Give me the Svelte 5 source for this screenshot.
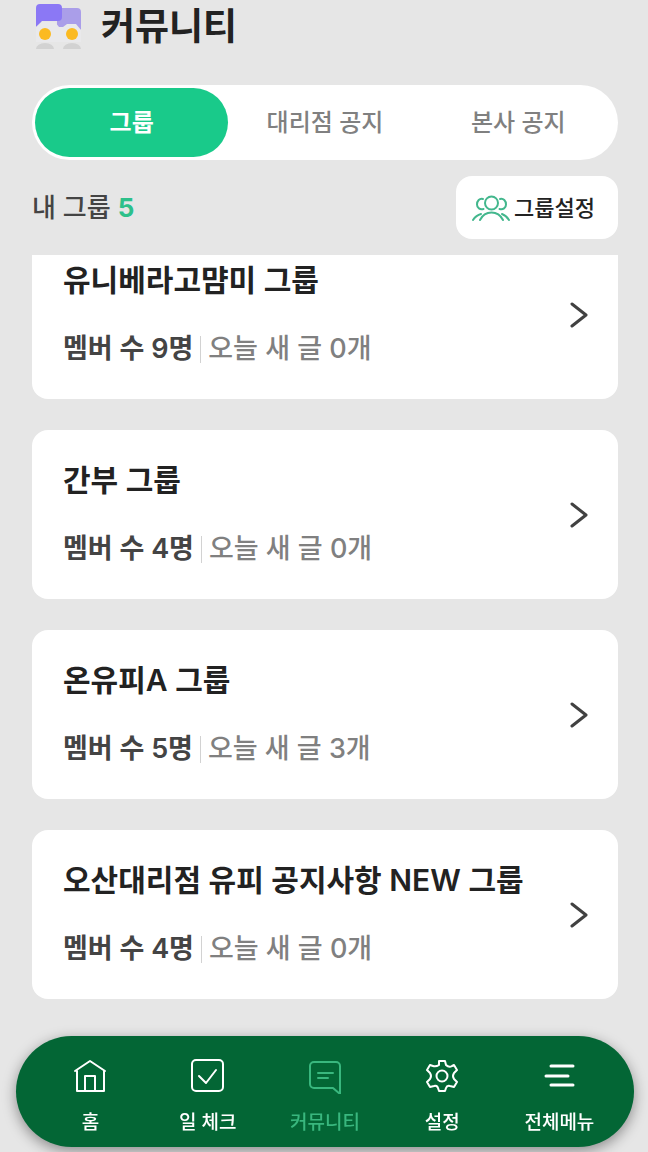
<script>
  import { onMount } from 'svelte';

  let activeTab = 0;
  let activeMenu = 'community';
  let groupCount = 5;
  let list;

  const tabs = ['그룹', '대리점 공지', '본사 공지'];

  const groups = [
    { name: '유니베라고먐미 그룹', members: 9, posts: 0 },
    { name: '간부 그룹', members: 4, posts: 0 },
    { name: '온유피A 그룹', members: 5, posts: 3 },
    { name: '오산대리점 유피 공지사항 NEW 그룹', members: 4, posts: 0 }
  ];

  const menus = [
    { id: 'home', label: '홈' },
    { id: 'check', label: '일 체크' },
    { id: 'community', label: '커뮤니티' },
    { id: 'settings', label: '설정' },
    { id: 'all', label: '전체메뉴' }
  ];

  onMount(() => {
    list.scrollTop = 25;
  });
</script>

<div class="page">
  <header>
    <svg width="48" height="48" viewBox="0 0 48 48" aria-hidden="true">
      <path d="M22 5h20a4 4 0 0 1 4 4v18l-6-3H22z" fill="#aa9ee9" />
      <path d="M5 1h18a4 4 0 0 1 4 4v9a4 4 0 0 1-4 4H7l-6 6V5a4 4 0 0 1 4-4z" fill="#8b78f5" />
      <path d="M1 24l6-5h13l4 5h4l4-3h9l5 6v12H1z" fill="#e9e9eb" />
      <circle cx="10" cy="31" r="6" fill="#fbba21" />
      <circle cx="37" cy="31" r="6" fill="#fbba21" />
      <path d="M1 46a9 6 0 0 1 18 0zM28 46a9 6 0 0 1 18 0z" fill="#d2d2d2" />
    </svg>
    <h1>커뮤니티</h1>
  </header>

  <div class="tabs">
    {#each tabs as tab, i}
      <button class:active={activeTab === i} on:click={() => (activeTab = i)}>{tab}</button>
    {/each}
  </div>

  <div class="toolbar">
    <h2>내 그룹 <span>{groupCount}</span></h2>
    <button class="manage">
      <svg width="38" height="26" viewBox="0 0 38 26" fill="none" stroke="#43b78d" stroke-width="2" stroke-linecap="round" aria-hidden="true">
        <circle cx="19.500" cy="8" r="6.500" />
        <path d="M11 4C7.500 3 5 6 5 9.500S8 15 11.500 14M28 4c3.500-1 6 2 6 5.500S31 15 27.500 14" />
        <path d="M8 25c5-10 18-10 23 0M1 25c2-3 4-5 8-6M37 25c-2-3-4-5-7-6" />
      </svg>
      <span>그룹설정</span>
    </button>
  </div>

  <div class="list" bind:this={list}>
    {#each groups as group}
      <a class="card" href="#group">
        <div>
          <h3>{group.name}</h3>
          <p>
            <strong>멤버 수 {group.members}명</strong>
            <i></i>
            <span>오늘 새 글 {group.posts}개</span>
          </p>
        </div>
        <svg width="18" height="28" viewBox="0 0 18 28" fill="none" stroke="#414141" stroke-width="3" stroke-linecap="round" stroke-linejoin="round" aria-hidden="true">
          <path d="M2 4l14 11L2 26" />
        </svg>
      </a>
    {/each}
  </div>

  <nav>
    {#each menus as menu}
      <a href="#{menu.id}" class:current={activeMenu === menu.id} on:click={() => (activeMenu = menu.id)}>
        <svg width="36" height="36" viewBox="0 0 36 36" fill="none" stroke="currentColor" stroke-width="2" stroke-linecap="round" stroke-linejoin="round" aria-hidden="true">
          {#if menu.id === 'home'}
            <path d="M2 13L17 3l15 10M4 13v20h27V13M12 33V18h10v15" />
          {:else if menu.id === 'check'}
            <rect x="2" y="2" width="31" height="31" rx="4" />
            <path d="M9 18l7 7 10-13" />
          {:else if menu.id === 'community'}
            <path d="M33 36V8a4 4 0 0 0-4-4H7a4 4 0 0 0-4 4v18a4 4 0 0 0 4 4h19zM11 15h15M11 20h10" />
          {:else if menu.id === 'settings'}
            <path d="M15 3h6l1 4q3 3 6 1l2-1 3 5-3 3q-2 3 0 6l3 3-3 5-4-1q-3-1-4 2l-1 3h-6l-1-3q-1-3-4-2l-4 1-3-5 3-3q2-3 0-6l-3-3 3-5 3 1q3 1 6-1z" />
            <circle cx="18" cy="18" r="5.500" />
          {:else}
            <path d="M10 8h22M5 18h22M10 27h22" stroke-width="3" />
          {/if}
        </svg>
        {menu.label}
      </a>
    {/each}
  </nav>
</div>

<style>
  :global(body) {
    background: #e6e6e6;
  }

  .page {
    display: flex;
    flex-direction: column;
    height: 100vh;
    padding: 0 30px 0 32px;
    box-sizing: border-box;
    overflow: hidden;
    color: #222;
    font-family: Inter, "Noto Sans CJK KR", sans-serif;
  }

  h1, h2, h3, p {
    margin: 0;
  }

  button {
    padding: 0;
    border: none;
    font-family: inherit;
    cursor: pointer;
  }

  a {
    color: inherit;
    text-decoration: none;
  }

  header {
    display: flex;
    align-items: center;
    gap: 18px;
    height: 53px;
    margin-bottom: 32px;
    padding-left: 3px;
    flex-shrink: 0;
  }

  h1 {
    font-size: 37px;
    font-weight: 600;
    line-height: 52px;
  }

  .tabs {
    display: grid;
    grid-template-columns: repeat(3, 1fr);
    height: 75px;
    padding: 3px;
    margin-bottom: 16px;
    box-sizing: border-box;
    flex-shrink: 0;
    background: #fff;
    border-radius: 38px;
  }

  .tabs button {
    padding-bottom: 4px;
    background: none;
    border-radius: 35px;
    color: #808080;
    font-size: 24px;
    font-weight: 500;
  }

  .tabs .active {
    background: #19ca8a;
    color: #fff;
    font-weight: 600;
  }

  .toolbar {
    display: flex;
    align-items: center;
    justify-content: space-between;
    margin-bottom: 16px;
  }

  h2 {
    color: #444;
    font-size: 26px;
    font-weight: 500;
    line-height: 36px;
  }

  h2 span {
    color: #2dc08a;
    font-weight: 700;
  }

  .manage {
    display: flex;
    align-items: center;
    gap: 4px;
    height: 63px;
    padding: 0 23px 0 16px;
    background: #fff;
    border-radius: 16px;
    color: #222;
    font-size: 22px;
    font-weight: 500;
  }

  .manage span {
    padding-bottom: 4px;
  }

  .list {
    display: flex;
    flex-direction: column;
    gap: 31px;
    flex: 1;
    min-height: 0;
    padding-bottom: 160px;
    overflow-y: auto;
    scrollbar-width: none;
  }

  .card {
    display: flex;
    align-items: center;
    justify-content: space-between;
    padding: 28px 30px 29px 31px;
    flex-shrink: 0;
    background: #fff;
    border-radius: 16px;
  }

  h3 {
    margin-bottom: 26px;
    font-size: 30px;
    font-weight: 600;
    line-height: 44px;
  }

  p {
    display: flex;
    align-items: center;
    gap: 7px;
    color: #808080;
    font-size: 27px;
    font-weight: 500;
    line-height: 42px;
  }

  strong {
    color: #444;
    font-weight: 600;
  }

  p i {
    width: 1px;
    height: 27px;
    background: #d2d2d2;
  }

  nav {
    position: fixed;
    left: 16px;
    right: 14px;
    bottom: 5px;
    display: grid;
    grid-template-columns: repeat(5, 1fr);
    height: 111px;
    padding: 0 16px;
    box-sizing: border-box;
    background: #036635;
    border-radius: 56px;
    box-shadow: 0 4px 14px rgba(0, 0, 0, 0.4);
  }

  nav a {
    display: flex;
    flex-direction: column;
    align-items: center;
    gap: 15px;
    padding-top: 22px;
    color: #fff;
    font-size: 19px;
    font-weight: 500;
    line-height: 28px;
  }

  nav .current {
    color: #39b77e;
  }
</style>
